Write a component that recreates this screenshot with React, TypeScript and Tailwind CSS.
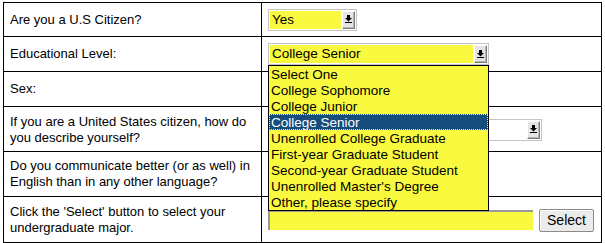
const YELLOW = "bg-[#f9f93f]";

const levels = [
  "Select One",
  "College Sophomore",
  "College Junior",
  "College Senior",
  "Unenrolled College Graduate",
  "First-year Graduate Student",
  "Second-year Graduate Student",
  "Unenrolled Master's Degree",
  "Other, please specify",
];

function ArrowButton() {
  return (
    <div className="flex h-full w-[13px] items-center justify-center border border-t-white border-l-white border-r-[#7a7a7a] border-b-[#7a7a7a] bg-[#e4e4e4] shadow-[inset_-1px_-1px_0_#b8b8b8]">
      <svg width="7" height="9" viewBox="0 0 7 9">
        <rect x="2" y="0" width="3" height="3" fill="#000" />
        <polygon points="0,3 7,3 3.5,6.5" fill="#000" />
        <rect x="0" y="7" width="7" height="1" fill="#000" />
      </svg>
    </div>
  );
}

function FakeSelect({ value, width, yellow = true }: { value: string; width: string; yellow?: boolean }) {
  return (
    <div className={`flex h-[22px] ${width} border border-[#c4c4c4] bg-white p-px text-[13.5px]`}>
      <div className={`flex flex-1 items-center pl-[2px] ${yellow ? YELLOW : "bg-white"}`}>{value}</div>
      <div className="ml-px">
        <ArrowButton />
      </div>
    </div>
  );
}

export default function App() {
  return (
    <div className="bg-white pl-[3px] pt-[2px] font-['Liberation_Sans',Arial,sans-serif] text-[13px] leading-[16px] text-black">
      <div className="w-[599px] divide-y divide-black border border-black">
        {/* Citizen */}
        <div className="flex h-[34px]">
          <div className="flex w-[258px] items-center border-r border-black pl-[6px]">Are you a U.S Citizen?</div>
          <div className="flex flex-1 items-center pl-[6px]">
            <FakeSelect value="Yes" width="w-[89px]" />
          </div>
        </div>

        {/* Educational level */}
        <div className="flex h-[35px]">
          <div className="flex w-[258px] items-center border-r border-black pl-[6px]">Educational Level:</div>
          <div className="flex flex-1 items-center pl-[6px]">
            <div className="relative z-10">
              <FakeSelect value="College Senior" width="w-[221px]" />
              <div className={`absolute left-0 top-full w-[221px] border border-black text-[13.5px] ${YELLOW}`}>
                {levels.map((l) => (
                  <div
                    key={l}
                    className={`h-[16px] pl-[2px] leading-[17px] ${l === "College Senior" ? "bg-[#164d7c] text-white outline-1 outline-dotted outline-[#f9f93f] -outline-offset-1" : ""}`}
                  >
                    {l}
                  </div>
                ))}
              </div>
            </div>
          </div>
        </div>

        {/* Sex */}
        <div className="flex h-[35px]">
          <div className="flex w-[258px] items-center border-r border-black pl-[6px]">Sex:</div>
          <div className="flex-1" />
        </div>

        {/* Ethnicity */}
        <div className="flex h-[45px]">
          <div className="flex w-[258px] items-center border-r border-black pl-[6px] pt-[2px]">
            <span>
              If you are a United States citizen, how do
              <br />
              you describe yourself?
            </span>
          </div>
          <div className="flex flex-1 items-center pl-[6px] pt-[1px]">
            <FakeSelect value="" width="w-[274px]" yellow={false} />
          </div>
        </div>

        {/* Language */}
        <div className="flex h-[45px]">
          <div className="flex w-[258px] items-center border-r border-black pl-[6px]">
            <span>
              Do you communicate better (or as well) in
              <br />
              English than in any other language?
            </span>
          </div>
          <div className="flex-1" />
        </div>

        {/* Major */}
        <div className="flex h-[45px]">
          <div className="flex w-[258px] items-center border-r border-black pl-[6px]">
            <span>
              Click the 'Select' button to select your
              <br />
              undergraduate major.
            </span>
          </div>
          <div className="flex flex-1 items-center gap-[6px] pl-[6px] pt-[1px]">
            <div className={`h-[20px] w-[265px] border-l-2 border-t-2 border-l-[#9a9a9a] border-t-[#9a9a9a] ${YELLOW}`} />
            <button className="h-[23px] w-[55px] rounded-[2px] border border-[#8a8a8a] bg-[#ebebeb] text-[14px] text-black shadow-[inset_1px_1px_0_#fff]">
              Select
            </button>
          </div>
        </div>
      </div>
    </div>
  );
}
